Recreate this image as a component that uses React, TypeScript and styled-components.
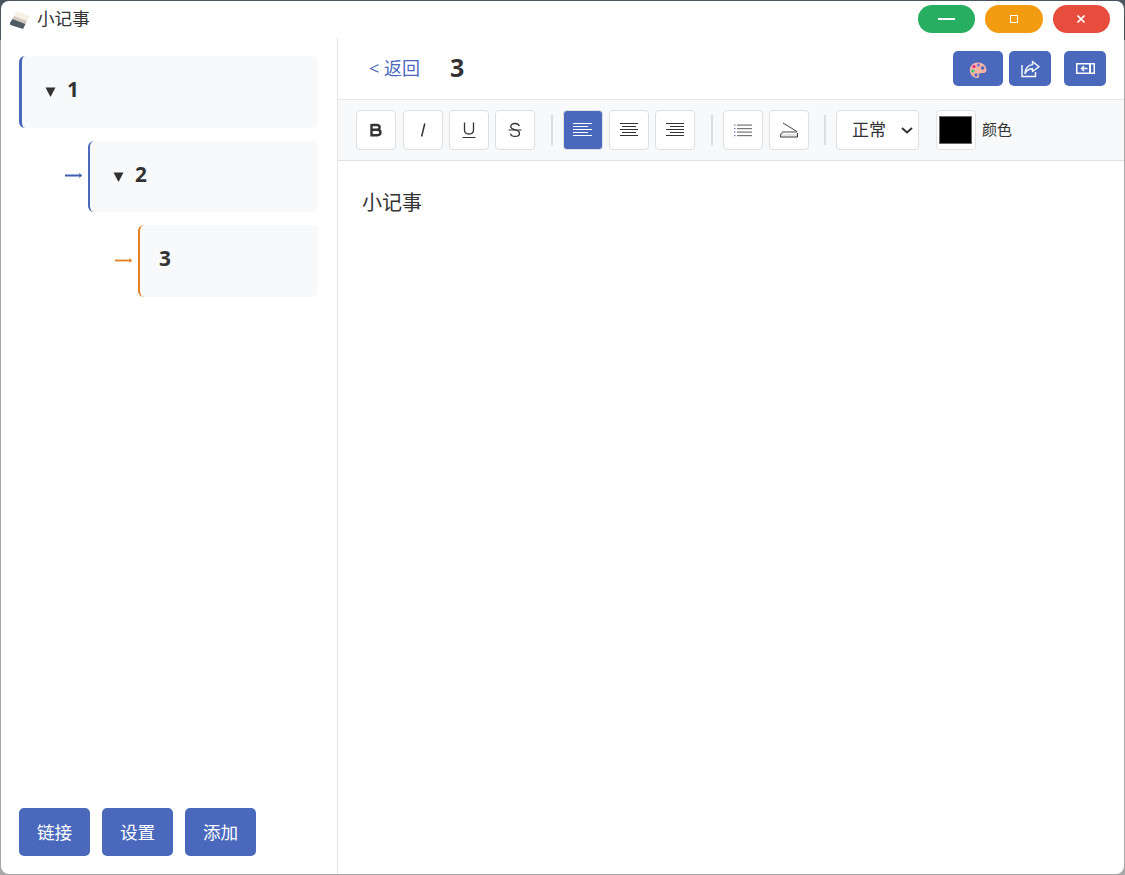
import React from 'react';
import styled, { createGlobalStyle } from 'styled-components';

const Global = createGlobalStyle`
  html, body { margin: 0; padding: 0; height: 100%; background: #8c8c8c; overflow: hidden; }
  #root { height: 100%; }
  * { box-sizing: border-box; }
`;

const FONT = `"Open Sans", "Noto Sans CJK SC", sans-serif`;

const Backdrop = styled.div`
  width: 1125px;
  height: 875px;
  background: linear-gradient(#4a5560 0, #4a5560 40px, #a8a8a8 40px);
  padding: 1px;
`;

const Window = styled.div`
  width: 100%;
  height: 100%;
  background: #fff;
  border-radius: 8px;
  display: flex;
  flex-direction: column;
  overflow: hidden;
  font-family: ${FONT};
  color: #333;
`;

const TitleBar = styled.header`
  height: 37px;
  flex: none;
  display: flex;
  align-items: center;
  padding: 0 14px 0 8px;
`;

const AppTitle = styled.span`
  font-size: 17.6px;
  line-height: 24px;
  margin: -3px 0 0 7px;
  color: #333;
`;

const WindowControls = styled.div`
  margin-left: auto;
  display: flex;
  gap: 10px;
  margin-top: -1px;
`;

const WindowButton = styled.button<{ $bg: string }>`
  width: 57.5px;
  height: 28px;
  border: 0;
  padding: 0;
  border-radius: 14px;
  background: ${p => p.$bg};
  display: flex;
  align-items: center;
  justify-content: center;
`;

const Body = styled.div`
  flex: 1;
  display: flex;
  min-height: 0;
`;

const Sidebar = styled.aside`
  width: 337px;
  flex: none;
  border-right: 1px solid #e4e4e4;
  padding: 18px 19px 18px 18px;
  display: flex;
  flex-direction: column;
`;

const Tree = styled.div`
  flex: 1;
  display: flex;
  flex-direction: column;
  gap: 13px;
`;

const TreeRow = styled.div<{ $indent: number }>`
  display: flex;
  align-items: center;
  margin-left: ${p => p.$indent}px;
`;

const Arrow = styled.svg`
  flex: none;
  margin: -2px 5px 0 0;
`;

const NoteCard = styled.div<{ $accent: string; $edge: number; $pad: number; $height: number }>`
  flex: 1;
  height: ${p => p.$height}px;
  background: #f8f9fa;
  border-left: ${p => p.$edge}px solid ${p => p.$accent};
  border-radius: 6px;
  display: flex;
  align-items: center;
  padding: 0 0 6px ${p => p.$pad}px;
  font-size: 20.8px;
  font-weight: 700;
  color: #333;
`;

const Caret = styled.svg`
  margin-right: 11px;
  margin-top: 6px;
`;

const SideActions = styled.div`
  display: flex;
  gap: 12px;
`;

const SideButton = styled.button`
  width: 71px;
  height: 48px;
  border: 0;
  padding: 0 0 2px;
  border-radius: 5px;
  background: #4a69bd;
  color: #fff;
  font-family: ${FONT};
  font-size: 17.6px;
`;

const Main = styled.main`
  flex: 1;
  min-width: 0;
  display: flex;
  flex-direction: column;
`;

const TopBar = styled.div`
  height: 61px;
  flex: none;
  display: flex;
  align-items: center;
  padding: 0 18px 0 31px;
`;

const BackLink = styled.span`
  font-size: 18px;
  line-height: 24px;
  color: #4a69bd;
  width: 81px;
  margin-top: -1px;
`;

const NoteTitle = styled.h1`
  margin: -3px 0 0;
  font-size: 25px;
  line-height: 32px;
  font-weight: 700;
  color: #333;
  font-family: ${FONT};
`;

const TopActions = styled.div`
  margin-left: auto;
  display: flex;
`;

const ActionButton = styled.button<{ $w: number; $gap: number }>`
  width: ${p => p.$w}px;
  height: 35px;
  margin-left: ${p => p.$gap}px;
  border: 0;
  padding: 0;
  border-radius: 5px;
  background: #4a69bd;
  display: flex;
  align-items: center;
  justify-content: center;
`;

const Toolbar = styled.div`
  height: 62px;
  flex: none;
  display: flex;
  align-items: center;
  padding: 0 0 1px 18px;
  background: #f8f9fa;
  border-top: 1px solid #e8e8e8;
  border-bottom: 1px solid #e0e0e0;
`;

const ToolButton = styled.button<{ $active?: boolean; $gap?: number }>`
  width: 40px;
  height: 40px;
  flex: none;
  margin-left: ${p => p.$gap ?? 6}px;
  padding: 0;
  border: 1px solid #dedfe2;
  border-radius: 4px;
  background: ${p => (p.$active ? '#4a69bd' : '#fff')};
  display: flex;
  align-items: center;
  justify-content: center;
`;

const Divider = styled.span<{ $left: number; $right: number }>`
  width: 2px;
  height: 30px;
  flex: none;
  background: #dcdde0;
  margin: 0 ${p => p.$right}px 0 ${p => p.$left}px;
`;

const SelectWrap = styled.span`
  position: relative;
  width: 83px;
  height: 40px;
  flex: none;
  display: block;
`;

const SizeSelect = styled.select`
  width: 100%;
  height: 100%;
  appearance: none;
  padding: 0 0 0 15px;
  border: 1px solid #dedfe2;
  border-radius: 4px;
  background: #fff;
  color: #333;
  font-family: ${FONT};
  font-size: 17px;
`;

const SelectChevron = styled.svg`
  position: absolute;
  right: 6px;
  top: 17px;
  pointer-events: none;
`;

const ColorWell = styled.span`
  width: 40px;
  height: 40px;
  flex: none;
  margin-left: 17px;
  padding: 5px 3px 5px 2px;
  border: 1px solid #e2e3e6;
  border-radius: 4px;
  background: #fff;
  display: block;
`;

const Swatch = styled.span`
  display: block;
  width: 100%;
  height: 100%;
  background: #000;
  border: 1px solid #666;
`;

const ColorLabel = styled.span`
  margin: -1px 0 0 6px;
  font-size: 15px;
  line-height: 20px;
  color: #333;
`;

const Editor = styled.div`
  flex: 1;
  padding: 27px 24px;
  font-size: 20px;
  line-height: 30px;
  color: #333;
`;

const Ico = ({ children, w = 20, h = 20 }: { children: React.ReactNode; w?: number; h?: number }) => (
  <svg width={w} height={h} viewBox={`0 0 ${w} ${h}`} fill="none">{children}</svg>
);

const Lines = ({ rows, color = '#333' }: { rows: [number, number][]; color?: string }) => (
  <Ico w={20} h={16}>
    {rows.map(([x1, x2], i) => (
      <rect key={i} x={x1} y={1 + i * 3} width={x2 - x1} height={1} fill={color} />
    ))}
  </Ico>
);

const ArrowIcon = ({ color }: { color: string }) => (
  <Arrow width={19} height={9} viewBox="0 0 19 9" fill="none">
    <path d="M1 4.5H17.5" stroke={color} strokeWidth="1.8" />
    <path d="M15 2.5L17.5 4.5L15 6.5" stroke={color} strokeWidth="1" />
  </Arrow>
);

const CaretIcon = () => (
  <Caret width={11} height={10} viewBox="0 0 11 10">
    <path d="M0.5 0.5H10.5L5.5 10Z" fill="#333" />
  </Caret>
);

const Eraser = () => (
  <svg width={21} height={20} viewBox="0 0 21 20">
    <path d="M7.5 1L20.5 6L18 11L5 6Z" fill="#f6efe4" />
    <path d="M5 6L18 11L16.5 14L3.5 9Z" fill="#d5c8be" />
    <path d="M3.5 9L16.5 14L14 19L1.5 15Q0.5 14 1.2 12.5Z" fill="#4f5a63" />
  </svg>
);

export default function App() {
  return (
    <Backdrop>
      <Global />
      <Window>
        <TitleBar>
          <Eraser />
          <AppTitle>小记事</AppTitle>
          <WindowControls>
            <WindowButton $bg="#27ae60" aria-label="minimize">
              <Ico w={17} h={4}><rect y="1" width="17" height="2" fill="#fff" /></Ico>
            </WindowButton>
            <WindowButton $bg="#f39c12" aria-label="maximize">
              <Ico w={8} h={8}><rect x="0.5" y="0.5" width="7" height="7" stroke="#fff" /></Ico>
            </WindowButton>
            <WindowButton $bg="#e74c3c" aria-label="close">
              <Ico w={8} h={8}><path d="M0.5 0.5L7.5 7.5M7.5 0.5L0.5 7.5" stroke="#fff" strokeWidth="1.7" /></Ico>
            </WindowButton>
          </WindowControls>
        </TitleBar>
        <Body>
          <Sidebar>
            <Tree>
              <TreeRow $indent={0}>
                <NoteCard $accent="#4a69bd" $edge={3} $pad={23} $height={72}><CaretIcon />1</NoteCard>
              </TreeRow>
              <TreeRow $indent={45}>
                <ArrowIcon color="#3f5faf" />
                <NoteCard $accent="#4a69bd" $edge={2} $pad={23} $height={71}><CaretIcon />2</NoteCard>
              </TreeRow>
              <TreeRow $indent={95}>
                <ArrowIcon color="#e67e22" />
                <NoteCard $accent="#e67e22" $edge={2} $pad={19} $height={72}>3</NoteCard>
              </TreeRow>
            </Tree>
            <SideActions>
              <SideButton>链接</SideButton>
              <SideButton>设置</SideButton>
              <SideButton>添加</SideButton>
            </SideActions>
          </Sidebar>
          <Main>
            <TopBar>
              <BackLink>&lt; 返回</BackLink>
              <NoteTitle>3</NoteTitle>
              <TopActions>
                <ActionButton $w={50} $gap={0} aria-label="theme">
                  <Ico w={18} h={18}>
                    <g transform="translate(0 1)">
                      <path d="M9 1.5C4.3 1.5 0.8 4.8 0.8 9.2C0.8 13.6 4.3 17 8.5 17C10 17 10.5 16 10 14.8C9.4 13.2 10.3 12 12 12H14.5C16.5 12 17.5 10.6 17.4 8.8C17.2 4.5 13.6 1.5 9 1.5Z" fill="#f4b3a4" />
                      <circle cx="5" cy="5.6" r="1.5" fill="#e91e8c" />
                      <circle cx="9.4" cy="4" r="1.5" fill="#7a6fd0" />
                      <circle cx="13.6" cy="7" r="1.8" fill="#4a69bd" />
                      <circle cx="3.8" cy="10" r="1.5" fill="#2ecc71" />
                      <circle cx="7" cy="14" r="1.7" fill="#5a6fd0" />
                    </g>
                  </Ico>
                </ActionButton>
                <ActionButton $w={42} $gap={6} aria-label="share">
                  <Ico w={19} h={18}>
                    <path d="M1 5V16.5H14.5V12" stroke="#fff" strokeWidth="1.4" />
                    <path d="M11.5 1.5L18 6.8L11.5 11.5V8.8C8 8.8 5.8 10.2 4 13.5C4.3 8.8 7 5.2 11.5 4.6Z" stroke="#fff" strokeWidth="1.4" strokeLinejoin="round" />
                  </Ico>
                </ActionButton>
                <ActionButton $w={42} $gap={13} aria-label="collapse">
                  <Ico w={19} h={11}>
                    <rect x="0.75" y="0.75" width="17.5" height="9.5" stroke="#fff" strokeWidth="1.5" />
                    <path d="M14 0.6V10.4" stroke="#fff" strokeWidth="2" />
                    <path d="M11.5 5.5H5.5M8 3L5.5 5.5L8 8" stroke="#fff" strokeWidth="1.5" />
                  </Ico>
                </ActionButton>
              </TopActions>
            </TopBar>
            <Toolbar>
              <ToolButton $gap={0} aria-label="bold">
                <Ico w={14} h={14}>
                  <path d="M2.5 2H7.8C9.6 2 10.6 3 10.6 4.3C10.6 5.8 9.6 6.8 7.8 6.8H2.5M2.5 6.8H8.3C10.4 6.8 11.5 8 11.5 9.6C11.5 11.2 10.4 12.2 8.3 12.2H2.5V1" stroke="#333" strokeWidth="2.4" />
                </Ico>
              </ToolButton>
              <ToolButton $gap={7} aria-label="italic">
                <Ico w={14} h={16}><path d="M8.8 1.5L5.6 14.5" stroke="#333" strokeWidth="1.5" /></Ico>
              </ToolButton>
              <ToolButton aria-label="underline">
                <Ico w={14} h={18}>
                  <path d="M2.5 1.5V9C2.5 11.5 4.2 13 7 13C9.8 13 11.5 11.5 11.5 9V1.5" stroke="#333" strokeWidth="1.3" />
                  <rect x="0.5" y="16" width="13" height="1" fill="#333" />
                </Ico>
              </ToolButton>
              <ToolButton aria-label="strike">
                <Ico w={14} h={16}>
                  <path d="M11.3 4C10.8 2.5 9.3 1.5 7 1.5C4.5 1.5 2.8 2.7 2.8 4.6C2.8 6.5 4.4 7.2 7 7.8C9.8 8.4 11.5 9.2 11.5 11.2C11.5 13.2 9.6 14.4 7 14.4C4.4 14.4 2.8 13.3 2.4 11.6" stroke="#333" strokeWidth="1.3" />
                  <rect x="0.5" y="7.5" width="13" height="1" fill="#333" />
                </Ico>
              </ToolButton>
              <Divider $left={16} $right={10} />
              <ToolButton $active $gap={0} aria-label="left">
                <Lines color="#fff" rows={[[0, 19], [0, 15], [0, 19], [0, 15], [0, 19]]} />
              </ToolButton>
              <ToolButton aria-label="center">
                <Lines rows={[[1, 19], [3, 17], [1, 19], [3, 17], [1, 19]]} />
              </ToolButton>
              <ToolButton aria-label="right">
                <Lines rows={[[1, 19], [5, 19], [1, 19], [5, 19], [1, 19]]} />
              </ToolButton>
              <Divider $left={16} $right={10} />
              <ToolButton $gap={0} aria-label="list">
                <Ico w={20} h={14}>
                  {[1.5, 5, 8.5, 12].map(y => (
                    <g key={y}>
                      <rect x="1" y={y} width="1.5" height="1.2" fill="#8577b5" />
                      <rect x="4" y={y} width="15" height="1.2" fill="#777" />
                    </g>
                  ))}
                </Ico>
              </ToolButton>
              <ToolButton aria-label="indent">
                <Ico w={20} h={18}>
                  <path d="M4 2L18 10.5" stroke="#444" strokeWidth="1" />
                  <path d="M3 11H18" stroke="#444" strokeWidth="1" />
                  <path d="M3.5 12C1.8 12 1.5 13 1.5 16H18.5V12" stroke="#333" strokeWidth="1" fill="none" />
                  <path d="M2 14H18" stroke="#bbb" strokeWidth="0.8" />
                </Ico>
              </ToolButton>
              <Divider $left={15} $right={10} />
              <SelectWrap>
                <SizeSelect defaultValue="正常" aria-label="size">
                  <option>正常</option>
                </SizeSelect>
                <SelectChevron width={12} height={7} viewBox="0 0 12 7" fill="none">
                  <path d="M1 1L6 5.5L11 1" stroke="#333" strokeWidth="2" />
                </SelectChevron>
              </SelectWrap>
              <ColorWell><Swatch /></ColorWell>
              <ColorLabel>颜色</ColorLabel>
            </Toolbar>
            <Editor>小记事</Editor>
          </Main>
        </Body>
      </Window>
    </Backdrop>
  );
}
